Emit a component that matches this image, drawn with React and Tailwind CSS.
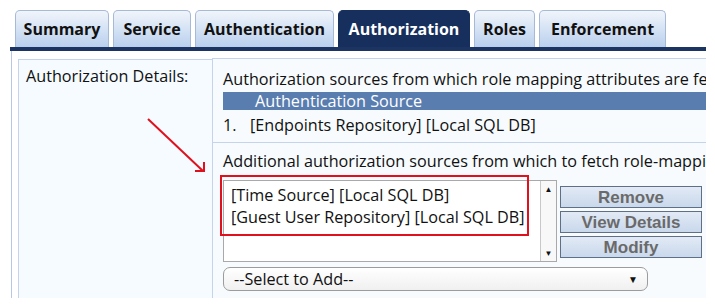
import React from 'react';

const tabs = [
  { label: 'Summary', w: 'w-[94px]' },
  { label: 'Service', w: 'w-[78px]' },
  { label: 'Authentication', w: 'w-[139px]' },
  { label: 'Authorization', w: 'w-[132px]', active: true },
  { label: 'Roles', w: 'w-[61px]' },
  { label: 'Enforcement', w: 'w-[127px]' },
];

const sources = [
  '[Time Source] [Local SQL DB]',
  '[Guest User Repository] [Local SQL DB]',
];

function Tab({ label, w, active }) {
  return (
    <div
      className={`${w} h-[37px] flex items-center justify-center rounded-t-[5px] border border-b-0 text-[16px] font-bold ${
        active
          ? 'bg-[#172f5c] border-[#172f5c] text-white'
          : 'bg-gradient-to-b from-[#f1f5fb] to-[#b9d0ed] border-[#a6b9d6] text-[#111]'
      }`}
    >
      {label}
    </div>
  );
}

function ActionButton({ children }) {
  return (
    <button className="h-[22px] w-[142px] border border-[#5f6f86] bg-gradient-to-b from-[#e2eaf5] to-[#c9d8ec] text-[17px] leading-none font-bold text-[#6a6a6a] font-['Liberation_Sans',Arial,sans-serif]">
      {children}
    </button>
  );
}

export default function App() {
  return (
    <div className="w-[715px] h-[308px] bg-white overflow-hidden font-['Open_Sans','Noto_Sans',sans-serif] text-[16.2px] text-[#111]">
      {/* Tabs */}
      <div className="flex items-end gap-[4px] pl-[15px] pt-[10px]">
        {tabs.map(t => <Tab key={t.label} {...t} />)}
      </div>
      <div className="ml-[10px] w-[696px] h-[4px] bg-[#1b3462]" />

      {/* Content */}
      <div className="relative ml-[11px] w-[695px] h-[247px] border-l border-[#b6c8e6] pl-[6px] pt-[7px] flex">
        <div className="w-[194px] shrink-0 border-l border-t border-[#c3d4ec] bg-[#f5fbff] pl-[7px] pt-[5px] mt-[1px] leading-[22px]">
          Authorization Details:
        </div>

        <div className="flex-1 min-w-0 flex flex-col">
          {/* Sub box 1 */}
          <div className="h-[85px] shrink-0 border-l border-t border-b border-[#c3d4ec] bg-[#f7fbfe] pl-[10px] pt-[9px] whitespace-nowrap overflow-hidden">
            <div className="leading-[22px]">Authorization sources from which role mapping attributes are fetched</div>
            <div className="mt-[2px] h-[18px] bg-[#5a7db0] text-white pl-[32px] leading-[18px]">Authentication Source</div>
            <div className="flex mt-[3px] leading-[24px]">
              <span className="w-[27px]">1.</span>
              <span>[Endpoints Repository] [Local SQL DB]</span>
            </div>
          </div>

          {/* Sub box 2 */}
          <div className="flex-1 border-l border-[#c3d4ec] bg-[#f7fbfe] pl-[10px] pt-[7px] whitespace-nowrap overflow-hidden">
            <div className="leading-[22px]">Additional authorization sources from which to fetch role-mapping attributes</div>
            <div className="flex items-start gap-[3px] mt-[8px]">
              <div className="w-[334px] h-[82px] shrink-0 border border-[#a9a9a9] bg-white flex">
                <div className="flex-1 pt-[3px] pl-[7px]">
                  {sources.map(s => (
                    <div key={s} className="leading-[22px]">{s}</div>
                  ))}
                </div>
                <div className="w-[16px] border-l border-[#c8c8c8] bg-[#f8f8f8] flex flex-col justify-between items-center py-[2px] text-[8px] text-[#111]">
                  <span>▲</span>
                  <span>▼</span>
                </div>
              </div>
              <div className="flex flex-col gap-[3px] mt-[6px]">
                <ActionButton>Remove</ActionButton>
                <ActionButton>View Details</ActionButton>
                <ActionButton>Modify</ActionButton>
              </div>
            </div>
            <div className="mt-[5px] w-[425px] h-[24px] rounded-[7px] border border-[#9c9c9c] bg-gradient-to-b from-white to-[#f0f0f0] flex items-center justify-between pl-[10px] pr-[9px]">
              <span>--Select to Add--</span>
              <span className="text-[10px]">▼</span>
            </div>
          </div>
        </div>

        {/* Highlight overlay */}
        <div className="absolute left-[208px] top-[124px] w-[309px] h-[61px] border-2 border-[#e0101c] pointer-events-none" />
        <svg className="absolute left-[130px] top-[62px] pointer-events-none" width="70" height="62" viewBox="0 0 70 62">
          <path d="M6 6 L61 58" stroke="#e0101c" strokeWidth="2" fill="none" />
          <path d="M53 58 L62 58 L62 49" stroke="#e0101c" strokeWidth="2" fill="none" />
        </svg>
      </div>
    </div>
  );
}
